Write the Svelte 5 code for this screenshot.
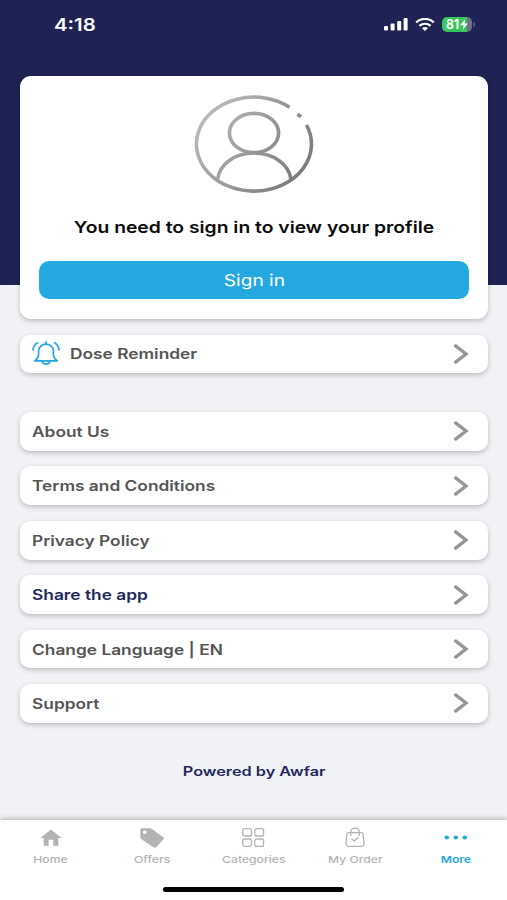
<script lang="ts">
  interface MenuItem {
    label: string
    highlighted?: boolean
  }

  type TabId = 'home' | 'offers' | 'categories' | 'order' | 'more'

  interface Tab {
    id: TabId
    label: string
  }

  const menuItems: MenuItem[] = [
    { label: 'About Us' },
    { label: 'Terms and Conditions' },
    { label: 'Privacy Policy' },
    { label: 'Share the app', highlighted: true },
    { label: 'Change Language | EN' },
    { label: 'Support' },
  ]

  const tabs: Tab[] = [
    { id: 'home', label: 'Home' },
    { id: 'offers', label: 'Offers' },
    { id: 'categories', label: 'Categories' },
    { id: 'order', label: 'My Order' },
    { id: 'more', label: 'More' },
  ]

  let activeTab: TabId = $state('more')
</script>

{#snippet chevron()}
  <svg class="chevron" viewBox="0 0 16 20" aria-hidden="true">
    <path d="M2.600 1.900 13 10 2.600 18.100" />
  </svg>
{/snippet}

<div class="screen">
  <header class="header">
    <div class="status-bar">
      <span class="time"><span class="wide">4:18</span></span>
      <div class="indicators">
        <svg class="signal" viewBox="0 0 24 13" aria-hidden="true">
          <rect x="0" y="8" width="4" height="4.5" rx="1" />
          <rect x="6.6" y="5.5" width="4" height="7" rx="1" />
          <rect x="13.2" y="3" width="4" height="9.5" rx="1" />
          <rect x="19.6" y="0" width="4" height="12.5" rx="1" />
        </svg>
        <svg class="wifi" viewBox="0 0 20 13" aria-hidden="true">
          <path d="M1.2 4.4C6.2-.3 13.8-.3 18.8 4.4M4.4 7.9c3.2-2.9 8-2.9 11.2 0" />
          <path class="dot" d="M7 10.200c1.700-1.500 4.300-1.500 6 0L10 12.900z" />
        </svg>
        <div class="battery">
          <span class="battery-level">81</span>
          <svg class="bolt" viewBox="0 0 7 10" aria-hidden="true">
            <path d="M4.5 0 0 5.7h3L2.4 10 7 4.2H4z" />
          </svg>
        </div>
      </div>
    </div>
  </header>

  <main class="content">
    <section class="profile">
      <svg class="avatar" viewBox="0 0 120 98" aria-hidden="true">
        <defs>
          <linearGradient id="metal" gradientUnits="userSpaceOnUse" x1="10" y1="15" x2="112" y2="85">
            <stop offset="0" stop-color="#bdbdbd" />
            <stop offset="0.5" stop-color="#999" />
            <stop offset="1" stop-color="#777" />
          </linearGradient>
        </defs>
        <path d="M95.6 12.200A57.500 47 0 1 0 112.500 30" />
        <path d="M103.500 19.200l3.600 2.600" />
        <ellipse cx="60" cy="38" rx="24.600" ry="19.600" />
        <path d="M23.500 84.500C25.500 69 41 58 60 58s35 11 37 26.500" />
      </svg>
      <p class="message"><span class="wide">You need to sign in to view your profile</span></p>
      <button class="sign-in"><span class="wide">Sign in</span></button>
    </section>

    <button class="row reminder">
      <svg class="bell" viewBox="0 0 28 25" aria-hidden="true">
        <path d="M2.800 19.800h22.400c-2.700-2-3.800-3.800-3.800-7.100V10c0-4-3.300-6.800-7.400-6.800S6.600 6 6.600 10v2.700c0 3.300-1.100 5.100-3.800 7.100zM14 .9v2.300M10 20.200c.5 4 7.500 4 8 0" />
        <path d="M5.400 1.800C2.700 3.500 1.200 5.900 1.100 9M22.600 1.800c2.700 1.700 4.200 4.100 4.300 7.200" />
      </svg>
      <span class="label"><span class="wide">Dose Reminder</span></span>
      {@render chevron()}
    </button>

    <nav class="menu">
      {#each menuItems as item}
        <button class="row" class:highlighted={item.highlighted}>
          <span class="label"><span class="wide">{item.label}</span></span>
          {@render chevron()}
        </button>
      {/each}
    </nav>

    <p class="powered"><span class="wide">Powered by Awfar</span></p>
  </main>

  <footer class="tab-bar">
    <div class="tabs">
      {#each tabs as tab}
        <button class="tab" class:active={tab.id === activeTab} onclick={() => (activeTab = tab.id)}>
          <svg class="tab-icon" viewBox="0 0 26 22" aria-hidden="true">
            {#if tab.id === 'home'}
              <path class="solid" d="M13 2.500 23.500 11h-3.200v7.800h-5v-6h-4.600v6h-5V11H2.500z" />
            {:else if tab.id === 'offers'}
              <path class="solid" fill-rule="evenodd" d="M2.500 1.200h8.200c.8 0 1.500.2 2 .6l11.500 8.400c.9.7.9 1.600.1 2.300l-7.100 7.500c-.8.800-2 .9-2.900.2L2.200 12c-.6-.4-.9-1-.9-1.700V2.500c0-.8.500-1.300 1.200-1.300zM5.800 3.500a1.900 1.700 0 1 0 0 3.400 1.900 1.700 0 0 0 0-3.400z" />
            {:else if tab.id === 'categories'}
              <rect x="2.700" y="1.600" width="8.800" height="7.400" rx="2" />
              <rect x="14.800" y="1.600" width="8.800" height="7.400" rx="2" />
              <rect x="2.700" y="12" width="8.800" height="7.400" rx="2" />
              <rect x="14.800" y="12" width="8.800" height="7.400" rx="2" />
            {:else if tab.id === 'order'}
              <path d="M6.700 5.700h12.600c1 0 1.700.5 1.800 1.400l.9 9.300c.2 2-.8 3-2.800 3H6.800c-2 0-3-1-2.800-3l.9-9.300c.1-.9.800-1.400 1.800-1.400zM8.800 8.400V5.200c0-2.500 1.600-4 4.200-4s4.200 1.500 4.200 4v3.200M10.200 12.200l2.200 1.700 3.600-3.400" />
            {:else}
              <ellipse class="solid" cx="3.800" cy="10.500" rx="2.300" ry="1.900" />
              <ellipse class="solid" cx="12.800" cy="10.500" rx="2.300" ry="1.900" />
              <ellipse class="solid" cx="21.800" cy="10.500" rx="2.300" ry="1.900" />
            {/if}
          </svg>
          <span class="wide">{tab.label}</span>
        </button>
      {/each}
    </div>
    <div class="home-indicator"></div>
  </footer>
</div>

<style>
  :global(body) {
    margin: 0;
  }

  .screen {
    display: flex;
    flex-direction: column;
    width: 100%;
    height: 900px;
    overflow: hidden;
    background: #f0f2f6;
    font-family: Inter, 'Liberation Sans', sans-serif;
  }

  button {
    padding: 0;
    border: none;
    background: none;
    font: inherit;
    cursor: pointer;
  }

  p {
    margin: 0;
  }

  /* expanded letterforms */
  .wide {
    display: inline-block;
    white-space: nowrap;
    transform: scaleX(1.2);
  }

  .header {
    flex: none;
    height: 285px;
    background: #1e2353;
  }

  .status-bar {
    display: flex;
    align-items: center;
    justify-content: space-between;
    height: 48px;
    padding: 0 35px 0 54px;
    color: #fff;
  }

  .time {
    padding-top: 1px;
    font-size: 17px;
    font-weight: 600;
  }

  .time .wide {
    transform-origin: left;
  }

  .indicators {
    display: flex;
    align-items: center;
    gap: 7px;
  }

  .signal {
    width: 24px;
    height: 13px;
    fill: #fff;
  }

  .wifi {
    width: 20px;
    height: 13px;
    fill: none;
    stroke: #fff;
    stroke-width: 2.2;
  }

  .wifi .dot {
    fill: #fff;
    stroke: none;
  }

  .battery {
    position: relative;
    display: flex;
    align-items: center;
    justify-content: center;
    width: 30px;
    height: 15px;
    border-radius: 5px;
    background: linear-gradient(90deg, #35c759 82%, #716d91 82%);
    font-size: 12.5px;
    font-weight: 700;
    gap: 1px;
  }

  .battery::after {
    content: '';
    position: absolute;
    right: -3px;
    width: 2px;
    height: 5px;
    border-radius: 0 2px 2px 0;
    background: #5b587f;
  }

  .bolt {
    width: 8px;
    height: 11px;
    fill: #fff;
  }

  .content {
    flex: 1;
    margin-top: -209px;
    padding: 0 19px 0 20px;
  }

  .profile {
    display: flex;
    flex-direction: column;
    align-items: center;
    box-sizing: border-box;
    height: 243px;
    padding: 19px 19px 0;
    border-radius: 11px;
    background: #fff;
    box-shadow: 0 2px 5px rgba(0, 0, 0, 0.22);
  }

  .avatar {
    width: 120px;
    height: 98px;
    fill: none;
    stroke: url(#metal);
    stroke-width: 3.6;
  }

  .message {
    margin-top: 22px;
    color: #0c0c0c;
    font-size: 16.5px;
    font-weight: 600;
    line-height: 24px;
  }

  .message .wide {
    transform: scaleX(1.17);
  }

  .sign-in {
    width: 100%;
    height: 38px;
    margin-top: 22px;
    border-radius: 10px;
    background: #24a8e0;
    color: #fff;
    font-size: 16.5px;
  }

  .sign-in .wide {
    transform: scaleX(1.16);
  }

  .row {
    display: flex;
    align-items: center;
    width: 100%;
    height: 38.8px;
    padding: 0 19px 0 12px;
    border-radius: 10px;
    background: #fff;
    box-shadow: 0 2px 5px rgba(0, 0, 0, 0.22);
    color: #555;
    font-size: 14.5px;
    font-weight: 600;
  }

  .row.highlighted {
    color: #232760;
  }

  .reminder {
    margin-top: 15.5px;
  }

  .label {
    flex: 1;
    text-align: left;
  }

  .label .wide {
    transform: scaleX(1.195);
    transform-origin: left;
  }

  .bell {
    width: 28px;
    height: 25px;
    margin-right: 10px;
    fill: none;
    stroke: #24a8e0;
    stroke-width: 1.7;
    stroke-linecap: round;
    stroke-linejoin: round;
  }

  .chevron {
    width: 16px;
    height: 20px;
    fill: none;
    stroke: #969696;
    stroke-width: 3.3;
    stroke-linecap: round;
  }

  .menu {
    display: flex;
    flex-direction: column;
    gap: 15.6px;
    margin-top: 38.8px;
  }

  .powered {
    margin-top: 39.4px;
    color: #232760;
    font-size: 12.8px;
    font-weight: 600;
    line-height: 20px;
    text-align: center;
  }

  .powered .wide {
    transform: scaleX(1.27);
  }

  .tab-bar {
    display: flex;
    flex: none;
    flex-direction: column;
    align-items: center;
    box-sizing: border-box;
    height: 80px;
    padding-top: 7px;
    background: #fff;
    box-shadow: 0 -1px 5px rgba(0, 0, 0, 0.28);
  }

  .tabs {
    display: grid;
    grid-template-columns: repeat(5, 1fr);
    width: 100%;
    height: 60px;
  }

  .tab {
    display: flex;
    flex-direction: column;
    align-items: center;
    gap: 4px;
    color: #b3b3b3;
    font-size: 9.5px;
    font-weight: 500;
    line-height: 14px;
  }

  .tab .wide {
    transform: scaleX(1.28);
  }

  .tab.active {
    color: #24a8e0;
  }

  .tab.active .wide {
    font-weight: 600;
  }

  .tab-icon {
    width: 26px;
    height: 22px;
    fill: none;
    stroke: currentColor;
    stroke-width: 1.3;
    stroke-linecap: round;
    stroke-linejoin: round;
  }

  .tab-icon .solid {
    fill: currentColor;
    stroke: none;
  }

  .home-indicator {
    width: 181px;
    height: 5px;
    border-radius: 3px;
    background: #000;
  }
</style>
